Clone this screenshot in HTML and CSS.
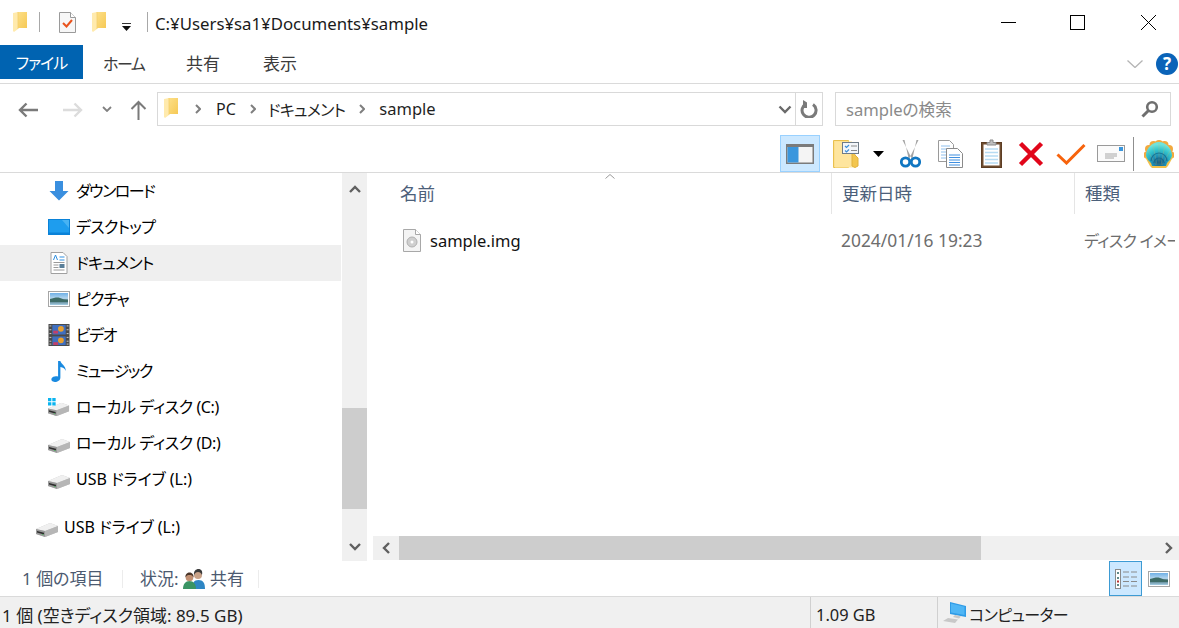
FILE: index.html
```html
<!DOCTYPE html>
<html lang="ja">
<head>
<meta charset="utf-8">
<title>sample</title>
<link rel="stylesheet" href="styles.css">
</head>
<body>
<svg class="defs" width="0" height="0" aria-hidden="true">
  <defs>
    <linearGradient id="fy" x1="0" y1="0" x2="1" y2="1"><stop offset="0" stop-color="#fde08a"/><stop offset="1" stop-color="#f6c955"/></linearGradient>
    <linearGradient id="sky" x1="0" y1="0" x2="0" y2="1"><stop offset="0" stop-color="#6fb0e6"/><stop offset=".45" stop-color="#b5d6ee"/><stop offset=".6" stop-color="#3f6a70"/><stop offset="1" stop-color="#a8d0e8"/></linearGradient>
    <radialGradient id="shellg" cx=".5" cy=".85" r=".75"><stop offset="0" stop-color="#12587f"/><stop offset=".35" stop-color="#1f8fb5"/><stop offset=".7" stop-color="#33c4cc"/><stop offset="1" stop-color="#6fe3dc"/></radialGradient>
    <symbol id="folder" viewBox="0 0 14 20">
      <path d="M4 0h10v16H4z" fill="url(#fy)"/>
      <path d="M0 1l5-1v17l-4 3-1-1z" fill="#ffeaad"/>
      <path d="M5 0v17" stroke="#f4cf6c" stroke-width=".8"/>
    </symbol>
    <symbol id="drive" viewBox="0 0 23 14">
      <path d="M0 6L14 0l8 3v6L9 14 0 11z" fill="#c4c4c4"/>
      <path d="M0 6L14 0l8 3L9 8z" fill="#f0f0f0"/>
      <path d="M9 8l13-5v6L9 14z" fill="#b6b6b6"/>
      <path d="M0 6l9 2v6l-9-3z" fill="#9a9a9a"/>
      <path d="M1 8l7 1.800v1.700l-7-2z" fill="#2e2e2e"/>
      <rect x="6" y="11" width="1.500" height="1" fill="#58b368"/>
    </symbol>
    <symbol id="landscape" viewBox="0 0 22 16">
      <rect x=".5" y=".5" width="21" height="15" fill="#fff" stroke="#a6a6a6"/>
      <rect x="2" y="2" width="18" height="12" fill="url(#sky)"/>
      <path d="M2 8c4-1 7-2 10-1s5 2 8 2v2H2z" fill="#3d6b66"/>
    </symbol>
  </defs>
</svg>

<div class="window">
  <header class="titlebar">
    <svg class="qa-folder"><use href="#folder"/></svg>
    <span class="qa-sep"></span>
    <svg class="qa-props" viewBox="0 0 17 21"><path d="M.5.500h11l5 5v15H.5z" fill="#f7f7f7" stroke="#9a9a9a"/><path d="M11.500.5v5h5" fill="#fff" stroke="#9a9a9a"/><path d="M4 11l3.500 3.500L13 8" fill="none" stroke="#e9531d" stroke-width="2"/></svg>
    <svg class="qa-folder2"><use href="#folder"/></svg>
    <svg class="qa-more" viewBox="0 0 9 8"><path d="M0 .5h9" stroke="#333"/><path d="M0 3h9L4.500 8z" fill="#111"/></svg>
    <span class="qa-sep2"></span>
    <span class="path-title">C:¥Users¥sa1¥Documents¥sample</span>
    <div class="win-buttons">
      <svg class="win-min" viewBox="0 0 15 1"><path d="M0 .5h15" stroke="#000"/></svg>
      <svg class="win-max" viewBox="0 0 15 15"><rect x=".5" y=".5" width="14" height="14" fill="none" stroke="#000"/></svg>
      <svg class="win-close" viewBox="0 0 15 15"><path d="M0 0l15 15M15 0L0 15" stroke="#000"/></svg>
    </div>
  </header>

  <nav class="ribbon">
    <span class="tab tab-file">ファイル</span>
    <span class="tab tab-home">ホーム</span>
    <span class="tab tab-share">共有</span>
    <span class="tab tab-view">表示</span>
    <svg class="rb-chevron" viewBox="0 0 16 8"><path d="M.5.500L8 7.500 15.500.500" fill="none" stroke="#b4b4b4" stroke-width="1.300"/></svg>
    <span class="rb-help">?</span>
  </nav>

  <div class="addressrow">
    <svg class="nv-back" viewBox="0 0 20 16"><path d="M20 8H2M8.500 1.500L2 8l6.500 6.500" fill="none" stroke="#7a7a7a" stroke-width="2.400"/></svg>
    <svg class="nv-fwd" viewBox="0 0 20 16"><path d="M0 8h18M11.500 1.500L18 8l-6.500 6.500" fill="none" stroke="#dcdcdc" stroke-width="2.400"/></svg>
    <svg class="nv-down" viewBox="0 0 10 6"><path d="M1 1l4 4 4-4" fill="none" stroke="#808080" stroke-width="1.800"/></svg>
    <svg class="nv-up" viewBox="0 0 17 20"><path d="M8.500 20V2M1.500 9l7-7 7 7" fill="none" stroke="#7a7a7a" stroke-width="2"/></svg>
    <div class="addressbox">
      <svg class="ab-folder"><use href="#folder"/></svg>
      <svg class="crumb-arrow first" viewBox="0 0 6 10"><path d="M1 1l4 4-4 4" fill="none" stroke="#7f7f7f" stroke-width="2"/></svg>
      <span class="crumb">PC</span>
      <svg class="crumb-arrow" viewBox="0 0 6 10"><path d="M1 1l4 4-4 4" fill="none" stroke="#7f7f7f" stroke-width="2"/></svg>
      <span class="crumb crumb-doc">ドキュメント</span>
      <svg class="crumb-arrow" viewBox="0 0 6 10"><path d="M1 1l4 4-4 4" fill="none" stroke="#7f7f7f" stroke-width="2"/></svg>
      <span class="crumb crumb-sample">sample</span>
      <svg class="ab-drop" viewBox="0 0 14 9"><path d="M1.500 1.500L7 7l5.500-5.500" fill="none" stroke="#6a6a6a" stroke-width="2.400"/></svg>
      <span class="ab-refresh">
        <svg viewBox="0 0 18 18"><path d="M6 4A7 7 0 1 0 13 4.500" fill="none" stroke="#7a7a7a" stroke-width="3"/><path d="M3 0v8h4V2.500z" fill="#7a7a7a"/></svg>
      </span>
    </div>
    <div class="searchbox">
      <span class="search-text">sampleの検索</span>
      <svg class="search-icon" viewBox="0 0 18 18"><circle cx="11" cy="7" r="4.800" fill="none" stroke="#6f6f6f" stroke-width="2.600"/><path d="M7.500 10.500L1.500 16.500" stroke="#6f6f6f" stroke-width="3"/></svg>
    </div>
  </div>

  <div class="toolbar">
    <span class="tb-active">
      <svg viewBox="0 0 28 20"><rect width="28" height="20" fill="#7b7b7b"/><rect x="1.500" y="3" width="25" height="15.500" fill="#f4f4f4"/><rect x="1.500" y="3" width="11" height="15.500" fill="#3a96dd"/></svg>
    </span>
    <svg class="tb-folder" viewBox="0 0 27 28">
      <path d="M.5.500h15v27H.5z" fill="#fde08c" stroke="#e9c04f"/>
      <path d="M2 1.500h17v23l4 3H2z" fill="#fee59e"/>
      <path d="M19 8v18l3 1.500 3-1.500V18l-3-3z" fill="#f3c64f" stroke="#e2b23d"/>
      <rect x="9.500" y="2.500" width="16" height="11" fill="#f2f6fa" stroke="#6e7b88"/>
      <path d="M12 6l1.500 1.500L16 5M12 10.500l1.500 1.500L16 9.500" fill="none" stroke="#3d8fd8" stroke-width="1.200"/>
      <path d="M18 6h6M18 10.500h6" stroke="#8a8a8a"/>
    </svg>
    <svg class="tb-caret" viewBox="0 0 11 6"><path d="M0 0h11L5.500 6z" fill="#000"/></svg>
    <svg class="tb-cut" viewBox="0 0 21 28">
      <path d="M2.500 0l9.500 19-3 1.500L4.500 0zM18.500 0L9 19l3 1.500L16.500 0z" fill="#a3a3a3"/>
      <circle cx="5.500" cy="22" r="4.200" fill="none" stroke="#1177c2" stroke-width="2.800"/>
      <circle cx="15.500" cy="22" r="4.200" fill="none" stroke="#1177c2" stroke-width="2.800"/>
    </svg>
    <svg class="tb-copy" viewBox="0 0 25 28">
      <path d="M.5.500h11l4 4v17H.5z" fill="#fff" stroke="#9a9a9a"/>
      <path d="M3 6h9M3 9h9M3 12h9M3 15h9M3 18h9" stroke="#8fc0ee"/>
      <path d="M8.500 8.500h11l5 5v14h-16z" fill="#fff" stroke="#8a8a8a"/>
      <path d="M11 15h11M11 17.500h11M11 20h11M11 22.500h11M11 25h11" stroke="#3f8fe0"/>
    </svg>
    <svg class="tb-paste" viewBox="0 0 21 29">
      <rect x=".5" y="3.500" width="20" height="25" fill="#6f4d30" stroke="#5c3d24"/>
      <rect x="2.500" y="5.500" width="16" height="21" fill="#fff"/>
      <path d="M4 10h13M4 13.500h13M4 17h13M4 20.500h13M4 24h13" stroke="#b7dcf3" stroke-width="1.500"/>
      <path d="M6 6V3.500h3V1h3v2.500h3V6z" fill="#bfbfbf" stroke="#8a8a8a"/>
    </svg>
    <svg class="tb-delete" viewBox="0 0 26 26"><path d="M2.500 2.500l21 21M23.500 2.500l-21 21" stroke="#e1061a" stroke-width="4.500"/></svg>
    <svg class="tb-check" viewBox="0 0 30 22"><path d="M1.500 11.500l9 8.500L28.500 2" fill="none" stroke="#f7630c" stroke-width="3"/></svg>
    <svg class="tb-mail" viewBox="0 0 28 17">
      <rect x=".5" y=".5" width="27" height="16" fill="#fbfbfb" stroke="#9a9a9a"/>
      <rect x="22" y="2" width="4" height="4" fill="#3a96dd"/>
      <path d="M8 9h12M8 11h12M8 13h9" stroke="#a6a6a6"/>
    </svg>
    <span class="tb-sep"></span>
    <svg class="tb-shell" viewBox="0 0 30 28">
      <g fill="#f2a93f">
        <circle cx="15" cy="4" r="4"/><circle cx="9.500" cy="5" r="4"/><circle cx="20.500" cy="5" r="4"/>
        <circle cx="5" cy="9" r="4"/><circle cx="25" cy="9" r="4"/><circle cx="3" cy="15" r="3.500"/><circle cx="27" cy="15" r="3.500"/>
      </g>
      <path d="M1 17l5 9 2 2h14l2-2 5-9-7-8H8z" fill="#f2c04a"/>
      <path d="M15 2c7 0 13 7 13 13 0 3-3 6-5 8l-1 3H8l-1-3c-2-2-5-5-5-8C2 9 8 2 15 2z" fill="url(#shellg)"/>
      <path d="M15 3v22M9 5l4 20M21 5l-4 20M4 11l8 14M26 11l-8 14" stroke="#f7b04a" stroke-width=".6" opacity=".35"/>
      <path d="M7 21a8 8 0 0 1 16 0M10 23a5 5 0 0 1 10 0" fill="none" stroke="#0f5f86" stroke-width="1.200" opacity=".7"/>
    </svg>
  </div>

  <main class="content">
    <aside class="navpane">
      <ul class="navlist">
        <li class="navitem">
          <svg class="ni" viewBox="0 0 22 22"><path d="M7 1h8v10h5.500L11 20.500 1.500 11H7z" fill="#3a8fdf"/></svg><span class="nt nt-dl">ダウンロード</span>
        </li>
        <li class="navitem">
          <svg class="ni" viewBox="0 0 22 16"><rect width="22" height="16" fill="#0a82d8"/><rect x="1" y="1" width="20" height="12.500" fill="#1e9dee"/><path d="M14 1h7v8z" fill="#48b3f3"/></svg><span class="nt nt-desk">デスクトップ</span>
        </li>
        <li class="navitem is-current">
          <svg class="ni ni-doc" viewBox="0 0 17 22"><path d="M.5.500h12l4 4v17H.5z" fill="#fff" stroke="#a0a0a0"/><path d="M3 8l2-5 2 5M9 5h5M9 8h5" fill="none" stroke="#2f8fe0"/><path d="M3 10.500h11M3 13h5M3 15.500h5M3 18h11" stroke="#9a9a9a"/><rect x="9" y="12" width="5" height="4" fill="#5a7f99"/></svg><span class="nt nt-desk">ドキュメント</span>
        </li>
        <li class="navitem">
          <svg class="ni"><use href="#landscape"/></svg><span class="nt nt-pic">ピクチャ</span>
        </li>
        <li class="navitem">
          <svg class="ni" viewBox="0 0 22 23">
            <rect width="22" height="23" fill="#4a4a4a"/>
            <path d="M1 2h2M1 6h2M1 10h2M1 14h2M1 18h2M1 21h2M19 2h2M19 6h2M19 10h2M19 14h2M19 18h2M19 21h2" stroke="#d0d0d0"/>
            <rect x="4" y="1" width="14" height="10" fill="#3f6fc0"/>
            <rect x="4" y="13" width="14" height="9" fill="#3f6fc0"/>
            <circle cx="13" cy="5" r="3" fill="#e8a030"/><rect x="5" y="7" width="5" height="3" fill="#c0406a"/>
            <circle cx="13" cy="17" r="3" fill="#e8a030"/><rect x="5" y="19" width="5" height="3" fill="#c0406a"/>
          </svg><span class="nt nt-dl">ビデオ</span>
        </li>
        <li class="navitem">
          <svg class="ni ni-music" viewBox="0 0 18 24"><path d="M8 1h2.500c.5 3 6 5 6 11-1-2.500-3-4-6-4.500V19c0 3-3 5-6 5S0 22 1 20s4-3 7-2z" fill="#1a8ae0"/></svg><span class="nt nt-dl">ミュージック</span>
        </li>
        <li class="navitem">
          <svg class="ni" viewBox="0 0 23 19">
            <use href="#drive" y="5" width="23" height="14"/>
            <path d="M0 0h3.500v3.500H0zM4.500 0H8v3.500H4.500zM0 4.500h3.500V8H0zM4.500 4.500H8V8H4.500z" fill="#0ab4f0"/>
          </svg><span class="nt nt-disk">ローカル ディスク (C:)</span>
        </li>
        <li class="navitem">
          <svg class="ni ni-drive"><use href="#drive"/></svg><span class="nt nt-disk">ローカル ディスク (D:)</span>
        </li>
        <li class="navitem">
          <svg class="ni ni-drive"><use href="#drive"/></svg><span class="nt">USB ドライブ (L:)</span>
        </li>
        <li class="navitem navitem-root">
          <svg class="ni ni-drive"><use href="#drive"/></svg><span class="nt">USB ドライブ (L:)</span>
        </li>
      </ul>
      <div class="vscroll">
        <svg class="sb-arrow" viewBox="0 0 12 8"><path d="M1 7l5-5 5 5" fill="none" stroke="#606060" stroke-width="2.400"/></svg>
        <span class="vthumb"></span>
        <svg class="sb-arrow sb-down" viewBox="0 0 12 8"><path d="M1 1l5 5 5-5" fill="none" stroke="#606060" stroke-width="2.400"/></svg>
      </div>
    </aside>

    <section class="filepane">
      <div class="filelist">
        <div class="colheads">
          <span class="col col-name">名前<svg class="sort" viewBox="0 0 10 5"><path d="M.5 4.500L5 .5l4.500 4" fill="none" stroke="#9a9a9a"/></svg></span>
          <span class="col col-date">更新日時</span>
          <span class="col col-type">種類</span>
        </div>
        <div class="filerow">
          <span class="cell cell-name">
            <svg class="file-icon" viewBox="0 0 18 23"><path d="M.5.500h12l5 5v17H.5z" fill="#f4f4f4" stroke="#a8a8a8"/><path d="M12.500.5v5h5" fill="#fff" stroke="#a8a8a8"/><circle cx="9" cy="13" r="5" fill="#cfcfcf" stroke="#b0b0b0"/><circle cx="9" cy="13" r="1.500" fill="#fff"/></svg>sample.img
          </span>
          <span class="cell cell-date">2024/01/16 19:23</span>
          <span class="cell cell-type">ディスク イメージ ファイル</span>
        </div>
      </div>
      <div class="hscroll">
        <svg class="hs-arrow" viewBox="0 0 8 12"><path d="M7 1L2 6l5 5" fill="none" stroke="#606060" stroke-width="2.400"/></svg>
        <span class="hthumb"></span>
        <svg class="hs-arrow hs-right" viewBox="0 0 8 12"><path d="M1 1l5 5-5 5" fill="none" stroke="#606060" stroke-width="2.400"/></svg>
      </div>
    </section>
  </main>

  <div class="statusbar">
    <span class="st st-count">1 個の項目</span>
    <span class="st-sep"></span>
    <span class="st st-state">状況:</span>
    <svg class="st-people" viewBox="0 0 22 20">
      <path d="M9 20c0-6 2-9 6.500-9S22 14 22 20z" fill="#2e86c4"/>
      <circle cx="15" cy="6" r="4" fill="#c9a288"/><path d="M11 6c-.5-4 2-6 4.500-6S20 2 19 6c-1-2-2-3-4-3s-3 1-4 3z" fill="#3a3a3a"/>
      <path d="M0 20c0-5 2.500-8 6.500-8s6.500 3 6.500 8z" fill="#3a9464"/>
      <circle cx="6.500" cy="8.500" r="3.800" fill="#c08f72"/><path d="M2.500 8.500C2 5 4.500 3.500 6.500 3.500S11 5 10.500 8.500c-1-2-2-2.500-4-2.500s-3 .5-4 2.500z" fill="#4a3528"/>
    </svg>
    <span class="st st-shared">共有</span>
    <span class="st-sep"></span>
    <div class="viewbtns">
      <span class="vb-active">
        <svg viewBox="0 0 22 20"><rect x=".5" y=".5" width="5" height="19" fill="#fff" stroke="#8a8a8a"/><path d="M2 3h2v2H2zM2 8h2v2H2zM2 15h2v2H2z" fill="#5f8a8a"/><path d="M2 11.500h2v2H2z" fill="#b33"/><path d="M8 3h6M16 3h6M8 8h6M16 8h6M8 12.500h6M16 12.500h6M8 17h6M16 17h6" stroke="#8a8a8a"/></svg>
      </span>
      <svg class="vb-thumb"><use href="#landscape"/></svg>
    </div>
  </div>

  <footer class="detailsbar">
    <span class="db-cell db-sel">1 個 (空きディスク領域: 89.5 GB)</span>
    <span class="db-cell db-size">1.09 GB</span>
    <span class="db-cell db-zone">
      <svg class="db-pc" viewBox="0 0 23 21"><path d="M7 0l16 4v11L7 12z" fill="#2f9be6"/><path d="M8 1.500l13.500 3.300V13L8 10.500z" fill="#4fb6f5"/><path d="M12 13l6 1.500-2 2-6-1.500zM5 16l10 1.500L12 21 0 19z" fill="#c8c8c8"/></svg><span class="db-pc-name">コンピューター</span>
    </span>
  </footer>
</div>
</body>
</html>
```

FILE: styles.css
```css
* { box-sizing: border-box; }
html, body { margin: 0; height: 100%; }
body {
  background: #fff;
  overflow: hidden;
  font-family: "Noto Sans", "Noto Sans CJK JP", sans-serif;
  font-size: 16px;
  font-feature-settings: "palt";
  color: #1a1a1a;
}
.defs { display: block; height: 0; }
svg { display: block; flex: none; }

.window { width: 1179px; height: 628px; display: flex; flex-direction: column; overflow: hidden; }

/* Title bar */
.titlebar { height: 45px; display: flex; align-items: center; flex: none; }
.qa-folder { width: 14px; height: 20px; margin-left: 13px; margin-top: -1px; }
.qa-sep { width: 1px; height: 20px; background: #a8a8a8; margin-left: 12px; margin-top: -1px; }
.qa-props { width: 17px; height: 21px; margin-left: 19px; margin-top: -1px; }
.qa-folder2 { width: 14px; height: 20px; margin-left: 16px; margin-top: -1px; }
.qa-more { width: 9px; height: 8px; margin-left: 16px; margin-top: 8px; }
.qa-sep2 { width: 1px; height: 20px; background: #a8a8a8; margin-left: 16px; margin-top: -1px; }
.path-title { margin-left: 7px; margin-top: 2px; white-space: nowrap; color: #1a1a1a; font-size: 16.8px; }
.win-buttons { margin-left: auto; display: flex; align-items: center; padding-right: 23px; margin-top: -1px; }
.win-min { width: 15px; height: 1px; }
.win-max { width: 15px; height: 15px; margin-left: 54px; }
.win-close { width: 15px; height: 15px; margin-left: 56px; }

/* Ribbon tabs */
.ribbon { height: 39px; flex: none; display: flex; align-items: flex-start; border-bottom: 1px solid #dadada; }
.tab { height: 34px; line-height: 38px; white-space: nowrap; color: #3c3c3c; }
.tab-file { width: 83px; background: #0063b1; color: #fff; text-align: center; letter-spacing: -1px; line-height: 36px; }
.tab-home { margin-left: 20px; width: 41px; letter-spacing: -1.5px; }
.tab-share { margin-left: 42px; width: 34px; font-size: 17px; }
.tab-view { margin-left: 43px; width: 35px; font-size: 17px; }
.rb-chevron { width: 16px; height: 8px; margin-left: auto; margin-top: 15px; }
.rb-help { width: 22px; height: 22px; border-radius: 50%; background: #0a63b8; color: #fff; font-weight: 700; font-size: 17px; line-height: 22px; text-align: center; margin-left: 13px; margin-right: 1px; margin-top: 8px; }

/* Address row */
.addressrow { height: 51px; flex: none; display: flex; align-items: center; }
.nv-back { width: 20px; height: 16px; margin-left: 18px; margin-top: 1px; }
.nv-fwd { width: 20px; height: 16px; margin-left: 25px; margin-top: 1px; }
.nv-down { width: 10px; height: 6px; margin-left: 19px; margin-top: -1px; }
.nv-up { width: 17px; height: 20px; margin-left: 18px; margin-top: 1px; }
.addressbox { width: 666px; height: 34px; margin-left: 10px; margin-top: -1px; border: 1px solid #d9d9d9; display: flex; align-items: center; }
.ab-folder { width: 14px; height: 20px; margin-left: 6px; margin-top: -2px; }
.crumb-arrow { width: 6px; height: 10px; margin-left: 14px; }
.crumb-arrow.first { margin-left: 17px; }
.crumb { margin-left: 15px; white-space: nowrap; color: #1f1f1f; margin-top: -1px; }
.crumb-doc { margin-left: 12px; letter-spacing: -.7px; }
.crumb-sample { font-size: 16.5px; margin-left: 14px; }
.ab-drop { width: 14px; height: 9px; margin-left: auto; margin-right: 3px; }
.ab-refresh { width: 27px; height: 32px; border-left: 1px solid #d9d9d9; display: flex; align-items: center; justify-content: center; }
.ab-refresh svg { width: 18px; height: 18px; }
.searchbox { width: 336px; height: 34px; margin-left: 12px; margin-top: -1px; border: 1px solid #d9d9d9; display: flex; align-items: center; padding: 0 11px 0 10px; justify-content: space-between; }
.search-text { color: #8a8a8a; margin-top: -1px; font-size: 16.6px; }
.search-icon { width: 18px; height: 18px; }

/* Toolbar */
.toolbar { height: 38px; flex: none; display: flex; align-items: center; justify-content: flex-end; padding-right: 5px; border-bottom: 1px solid #dadada; }
.tb-active { width: 40px; height: 37px; background: #cce8ff; border: 1px solid #99d1ff; display: flex; align-items: center; justify-content: center; }
.tb-active svg { width: 28px; height: 20px; }
.tb-folder { width: 27px; height: 28px; margin-left: 13px; }
.tb-caret { width: 11px; height: 6px; margin-left: 13px; }
.tb-cut { width: 21px; height: 28px; margin-left: 16px; }
.tb-copy { width: 25px; height: 28px; margin-left: 17px; }
.tb-paste { width: 21px; height: 29px; margin-left: 18px; }
.tb-delete { width: 26px; height: 26px; margin-left: 16px; }
.tb-check { width: 30px; height: 22px; margin-left: 12px; }
.tb-mail { width: 28px; height: 17px; margin-left: 11px; }
.tb-sep { width: 1px; height: 34px; background: #8f8f8f; margin-left: 8px; }
.tb-shell { width: 30px; height: 28px; margin-left: 10px; }

/* Content */
.content { height: 388px; flex: none; display: flex; }
.navpane { width: 367px; flex: none; display: flex; }
.navlist { width: 342px; margin: 0; padding: 0; list-style: none; }
.navitem { height: 36px; display: flex; align-items: center; padding-left: 48px; color: #000; white-space: nowrap; margin-right: 1px; }
.navitem.is-current { background: #efefef; }
.navitem-root { margin-top: 12px; padding-left: 36px; }
.nt { margin-top: -2px; }
.nt-dl { letter-spacing: -1.5px; }
.nt-desk { letter-spacing: -.7px; }
.nt-pic { letter-spacing: -1px; }
.nt-disk { letter-spacing: -.4px; }
.ni { width: 22px; height: 22px; margin-right: 6px; }
.ni-drive { width: 23px; height: 14px; margin-right: 5px; margin-top: 6px; }
.vscroll { width: 25px; background: #f0f0f0; display: flex; flex-direction: column; align-items: center; padding-top: 12px; }
.sb-arrow { width: 12px; height: 8px; }
.vthumb { width: 100%; height: 101px; background: #cdcdcd; margin-top: 215px; }
.sb-down { margin-top: 34px; }

.filepane { flex: 1; min-width: 0; padding-left: 6px; display: flex; flex-direction: column; }
.filelist { flex: 1; min-height: 0; overflow: hidden; }
.colheads { display: grid; grid-template-columns: 459px 243px 100px; height: 41px; }
.col { display: flex; align-items: center; padding: 0 0 2px 27px; color: #4c607a; white-space: nowrap; position: relative; border-right: 1px solid #e5e5e5; font-size: 17.5px; }
.col-date { padding-left: 10px; }
.col-type { padding-left: 10px; border-right: 0; }
.sort { position: absolute; left: 232px; top: 1px; width: 10px; height: 5px; }
.filerow { display: grid; grid-template-columns: 459px 243px 100px; height: 36px; margin-top: 9px; }
.cell { display: flex; align-items: center; white-space: nowrap; padding-bottom: 2px; }
.cell-name { padding-left: 30px; color: #111; font-size: 16.5px; }
.file-icon { width: 18px; height: 23px; margin-right: 9px; }
.cell-date { padding-left: 9px; color: #6d6d6d; font-size: 17.4px; }
.cell-type { padding-left: 9px; color: #6d6d6d; overflow: hidden; letter-spacing: -.7px; }

.hscroll { height: 24px; flex: none; background: #f0f0f0; display: flex; align-items: center; margin-bottom: 1px; }
.hs-arrow { width: 8px; height: 12px; margin-left: 9px; }
.hthumb { width: 582px; height: 100%; background: #cdcdcd; margin-left: 9px; }
.hs-right { margin-left: auto; margin-right: 6px; }

/* Status */
.statusbar { height: 36px; flex: none; display: flex; align-items: center; padding-left: 22px; border-bottom: 1px solid #dadada; }
.st { color: #4c5a70; white-space: nowrap; font-size: 17px; margin-top: -2px; }
.st-count { width: 100px; }
.st-sep { width: 1px; height: 18px; background: #ececec; }
.st-state { margin-left: 17px; width: 43px; }
.st-people { width: 22px; height: 20px; }
.st-shared { margin-left: 5px; width: 48px; }
.viewbtns { margin-left: auto; display: flex; align-items: center; padding-right: 9px; }
.vb-active { width: 33px; height: 35px; background: #cce8ff; border: 1px solid #3d9bd4; display: flex; align-items: center; justify-content: center; }
.vb-active svg { width: 22px; height: 20px; }
.vb-thumb { width: 22px; height: 16px; margin-left: 6px; }

/* Details bar */
.detailsbar { flex: 1; background: #f0f0f0; display: flex; align-items: center; }
.db-cell { height: 100%; display: flex; align-items: center; white-space: nowrap; color: #222; padding-top: 3px; }
.db-sel { width: 810px; padding-left: 2px; font-size: 17px; }
.db-size { width: 127px; padding-left: 5px; border-left: 1px solid #d0d0d0; font-size: 16.4px; }
.db-zone { flex: 1; padding-left: 5px; border-left: 1px solid #d0d0d0; }
.db-pc { width: 23px; height: 21px; margin-right: 3px; margin-top: -3px; }
.db-pc-name { letter-spacing: -.6px; }
```
